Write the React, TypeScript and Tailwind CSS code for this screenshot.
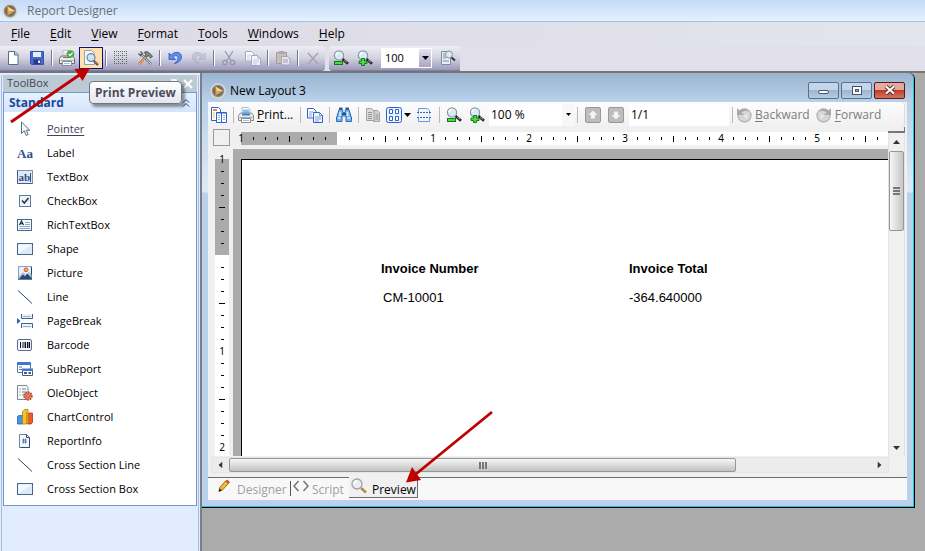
import React, { ReactNode } from "react";

const tahoma = "font-['Open_Sans','Noto_Sans',sans-serif]";

function Icon({ children, className = "" }: { children: ReactNode; className?: string }) {
  return (
    <svg viewBox="0 0 16 16" aria-hidden="true" className={`h-4 w-4 shrink-0 ${className}`}>
      {children}
    </svg>
  );
}

/* ---------- shared icons ---------- */

function AppLogo() {
  return (
    <Icon>
      <circle cx="8" cy="8" r="7" fill="#8f8a84" stroke="#dcd8d0" strokeWidth="1.6" />
      <circle cx="8" cy="8" r="5" fill="#6d6a70" />
      <path d="M5.500 3.500 13 8l-7.500 4.500z" fill="#e9a13a" />
      <path d="M5.500 3.500 13 8H7z" fill="#ffd27c" />
    </Icon>
  );
}

function Lens({ children }: { children?: ReactNode }) {
  return (
    <Icon>
      <path d="m9.500 9 5.500 4.800" stroke="#222" strokeWidth="2.6" />
      <path d="m11 9.800 3 2.600" stroke="#ddd" strokeWidth="0.8" />
      <circle cx="6" cy="5.400" r="4.600" fill="#d5ecfb" stroke="#8d969c" strokeWidth="1.2" />
      <path d="M3 5a3 3 0 0 1 3-2.600" stroke="#fff" strokeWidth="1.4" fill="none" />
      {children}
    </Icon>
  );
}

const ZoomOutIcon = () => (
  <Lens>
    <rect x="1.500" y="11.500" width="8" height="3" fill="#4fd84a" stroke="#127a12" />
  </Lens>
);

const ZoomInIcon = () => (
  <Lens>
    <path d="M4.500 8.500h3v2.500h2.500v2.500H7.500v2h-3v-2H2V11h2.500z" fill="#4fd84a" stroke="#127a12" />
  </Lens>
);

const CopyIcon = ({ stroke = "#2d62c8" }: { stroke?: string }) => (
  <Icon>
    <path d="M.500 1.500h6l2.500 2.500v7H.500z" fill="#fff" stroke={stroke} />
    <path d="M2 5h4M2 7h3M2 9h3" stroke={stroke} strokeWidth="0.6" />
    <path d="M6.500 5.500h6l3 3v7h-9z" fill="#f3f8ff" stroke={stroke} />
    <path d="M12.500 5.500v3h3M8 10h6M8 12h6M8 14h4" stroke={stroke} fill="none" strokeWidth="0.6" />
  </Icon>
);

const PrinterIcon = ({ check = false }: { check?: boolean }) => (
  <Icon>
    <path d="M4 7V.500h6.500L12 2v5z" fill="#fff" stroke="#b4bcc4" />
    <path d="M5 2.500h6V6H5z" fill={check ? "#dedede" : "#7cc4f4"} />
    <path d="M.500 8.500 2.500 6h11l2 2.500v5H.500z" fill="#e9e9e9" stroke={check ? "#6a6a6a" : "#8c8c8c"} />
    <path d="M4 7.500h8" stroke={check ? "#777" : "#2486e4"} strokeWidth={check ? 1 : 2} />
    <path d="M1.500 10.500h13" stroke="#a8a8a8" />
    <path d="M3.500 11.500h9v4h-9z" fill="#fff" stroke="#8a8a8a" />
    <path d="M5 13.500h6" stroke="#8cc8f0" />
    {check && (
      <>
        <circle cx="11.500" cy="4" r="3.800" fill="#4ba847" />
        <path d="m9.600 4 1.500 1.600 2.500-3" stroke="#fff" strokeWidth="1.300" fill="none" />
      </>
    )}
  </Icon>
);

/* ---------- main tool bar ---------- */

const NewIcon = () => (
  <Icon>
    <path d="M3.500 1.500h6.500l3 3v10H3.500z" fill="#fff" stroke="#53708a" />
    <path d="M9.500 1.500v3.500H13" fill="#bcd3ea" stroke="#53708a" />
  </Icon>
);

const SaveIcon = () => (
  <Icon>
    <path d="M1.500 1.500h13v13h-12l-1-1z" fill="#4668d0" stroke="#3450b0" />
    <path d="M4 2h8v5H4z" fill="#e8f0ff" />
    <path d="M4.500 9.500h7V14h-7z" fill="#253878" />
    <path d="M9 10.500h2V13H9z" fill="#e8f0ff" />
  </Icon>
);

const PreviewIcon = () => (
  <Icon>
    <path d="M1.500.500h7l3 3v11h-10z" fill="#f2f8ff" stroke="#8ea4bb" />
    <path d="m10.500 10.500 4.500 4.500" stroke="#3d4d60" strokeWidth="2.400" />
    <path d="m11 10.800 3.500 3.500" stroke="#d89a50" strokeWidth="1" />
    <circle cx="8" cy="7.500" r="3.900" fill="#cbe6f8" stroke="#77838e" strokeWidth="1.200" />
  </Icon>
);

const GridIcon = () => (
  <Icon>
    <path
      d="M1 1.500h13M1 5.500h13M1 9.500h13M1 13.500h13M1.500 1v13M5.500 1v13M9.500 1v13M13.500 1v13"
      stroke="#666"
      strokeDasharray="1 1"
      shapeRendering="crispEdges"
    />
  </Icon>
);

const HammerIcon = () => (
  <Icon>
    <path d="m4 4 10 10" stroke="#6a727a" strokeWidth="2.400" />
    <path d="m4 4 10 10" stroke="#cfd5da" strokeWidth="1" />
    <path d="M1.500 3.500 3.500 5.500 5.500 3.500 3.500 1.500" fill="none" stroke="#565e66" strokeWidth="1.400" />
    <path d="m9.500 6-7.500 8" stroke="#b8752c" strokeWidth="2.400" />
    <path d="m9.500 6-7.500 8" stroke="#f0bf80" strokeWidth="1" />
    <path d="M7 2.500 10 1.500l4 3 1.500 2-2 1.500-2-2.500L9.500 7 8 5.500l1-1.500z" fill="#7d8892" stroke="#3e474f" strokeWidth=".8" />
  </Icon>
);

const UndoIcon = ({ muted = false }: { muted?: boolean }) => (
  <Icon className={muted ? "-scale-x-100 opacity-60" : ""}>
    <path
      d="M2 3v6.500h6.500L6.200 7.300C7.500 5 10.500 4.800 11 7.500c.3 2.200-1 4.300-3.500 6 4-.7 6.800-3 7-6.500C14.600 2 8 .500 4.200 5.200z"
      fill={muted ? "#b4bbd4" : "#5a8ff0"}
      stroke={muted ? "#9aa3c2" : "#2857bd"}
      strokeWidth="0.800"
    />
  </Icon>
);

const CutIcon = () => (
  <Icon>
    <path d="m4 1 6 9.500M12 1 6 10.500" stroke="#9a98b0" strokeWidth="1.300" />
    <circle cx="4" cy="12.500" r="2.200" fill="none" stroke="#9a98b0" strokeWidth="1.300" />
    <circle cx="11.500" cy="12.500" r="2.200" fill="none" stroke="#9a98b0" strokeWidth="1.300" />
  </Icon>
);

const PasteIcon = () => (
  <Icon>
    <path d="M1.500 2.500h10v11h-10z" fill="#c8bfb4" stroke="#a49c9c" />
    <path d="M4 1h5v3H4z" fill="#aaa8b8" />
    <path d="M6.500 6.500h6l2.500 2.500v6H6.500z" fill="#e4e3ee" stroke="#a3a2b6" />
    <path d="M8 10h5M8 12h5" stroke="#a3a2b6" />
  </Icon>
);

const PageSearchIcon = () => (
  <Icon>
    <path d="M1.500 1.500h9v13h-9z" fill="#e9eef6" stroke="#7d8ba0" />
    <path d="M3 4h4M3 6h3M3 8h3M3 11h6" stroke="#7d8ba0" />
    <path d="m11 7 4 3.500" stroke="#333" strokeWidth="2" />
    <circle cx="9" cy="4.500" r="3.500" fill="#d8ebf7" stroke="#8a939b" />
  </Icon>
);

function ToolButton({ label, active, children }: { label: string; active?: boolean; children: ReactNode }) {
  return (
    <button
      type="button"
      aria-label={label}
      className={`flex h-[22px] w-6 items-center justify-center ${
        active ? "border border-[#10107a] bg-[#ffe0ae]" : ""
      }`}
    >
      {children}
    </button>
  );
}

const BarSeparator = () => (
  <span className="mx-[2px] h-4 w-[2px] shrink-0 border-r border-white bg-[#77759a]" />
);

const barStyle =
  "flex h-[25px] items-center border-b border-[#7e7ca3] bg-linear-to-b from-[#eeeef5] via-[#d3d2e0] to-[#9c9abb]";

function MainToolbar() {
  return (
    <div className="flex gap-1 bg-[#e1e0ea]" role="toolbar" aria-label="Standard">
      <div className={`${barStyle} rounded-r-sm pl-px`}>
        <ToolButton label="New"><NewIcon /></ToolButton>
        <ToolButton label="Save"><SaveIcon /></ToolButton>
        <BarSeparator />
        <ToolButton label="Print"><PrinterIcon check /></ToolButton>
        <ToolButton label="Print Preview" active><PreviewIcon /></ToolButton>
        <BarSeparator />
        <ToolButton label="Grid"><GridIcon /></ToolButton>
        <ToolButton label="Settings"><HammerIcon /></ToolButton>
        <BarSeparator />
        <ToolButton label="Undo"><UndoIcon /></ToolButton>
        <ToolButton label="Redo"><UndoIcon muted /></ToolButton>
        <BarSeparator />
        <ToolButton label="Cut"><CutIcon /></ToolButton>
        <ToolButton label="Copy"><CopyIcon stroke="#a3a6c0" /></ToolButton>
        <BarSeparator />
        <ToolButton label="Paste"><PasteIcon /></ToolButton>
        <BarSeparator />
        <ToolButton label="Delete">
          <Icon><path d="m3 3 10 11M13 3 3 14" stroke="#a5a3b5" strokeWidth="1.500" /></Icon>
        </ToolButton>
      </div>
      <div className={`${barStyle} rounded-l-sm`}>
        <ToolButton label="Zoom out"><ZoomOutIcon /></ToolButton>
        <ToolButton label="Zoom in"><ZoomInIcon /></ToolButton>
        <div className="relative mx-1 w-[51px]">
          <select
            aria-label="Zoom"
            className={`block h-5 w-full appearance-none bg-white pl-1 text-[11px] leading-5 text-black ${tahoma}`}
          >
            <option>100</option>
          </select>
          <span className="pointer-events-none absolute inset-y-px right-px flex w-3 items-center justify-center bg-linear-to-b from-[#e4e4ee] to-[#a7a5c4]">
            <DropArrow />
          </span>
        </div>
        <ToolButton label="Page preview"><PageSearchIcon /></ToolButton>
      </div>
    </div>
  );
}

function DropArrow() {
  return (
    <svg viewBox="0 0 7 4" aria-hidden="true" className="h-1 w-[7px]">
      <path d="M0 0h7L3.500 4z" fill="#000" />
    </svg>
  );
}

const menus = ["File", "Edit", "View", "Format", "Tools", "Windows", "Help"];

function MenuBar() {
  return (
    <nav className="flex h-6 items-center gap-5 bg-linear-to-r from-[#dbdae6] to-[#e4e4ec] px-[11px] font-['Open_Sans','Noto_Sans',sans-serif] text-[12px] text-black">
      {menus.map((m) => (
        <button key={m} type="button" className="leading-6">
          <span className="underline underline-offset-2">{m[0]}</span>
          {m.slice(1)}
        </button>
      ))}
    </nav>
  );
}

/* ---------- tool box ---------- */

const BoxIcon = () => (
  <Icon>
    <rect x=".500" y="2.500" width="15" height="11" fill="#dcebf8" stroke="#44698f" />
    <path d="M1.500 3.500h13l-13 9z" fill="#f3f9ff" />
  </Icon>
);

const LineIcon = () => (
  <Icon><path d="m1 1.500 14 13" stroke="#2b4468" /></Icon>
);

const tools: { label: string; icon: ReactNode }[] = [
  {
    label: "Pointer",
    icon: (
      <Icon>
        <path d="M4.500 1v11.500l2.700-2.600 2 4.600 2-.9-2-4.400h3.600z" fill="#f4f8fc" stroke="#4a6078" strokeWidth=".9" />
      </Icon>
    ),
  },
  {
    label: "Label",
    icon: (
      <Icon>
        <text x="0" y="13" fontFamily="Liberation Serif" fontWeight="bold" fontSize="13" fill="#2c4f8c">Aa</text>
      </Icon>
    ),
  },
  {
    label: "TextBox",
    icon: (
      <Icon>
        <rect x=".500" y="1.500" width="15" height="13" fill="#dfe9f5" stroke="#7d93b0" />
        <path d="M.500 1.500v13h15" fill="none" stroke="#3f5d86" />
        <text x="1.500" y="12" fontFamily="Liberation Serif" fontWeight="bold" fontSize="11" fill="#314f7e">ab</text>
        <path d="M13.500 4v9" stroke="#314f7e" />
      </Icon>
    ),
  },
  {
    label: "CheckBox",
    icon: (
      <Icon>
        <rect x="2.500" y="2.500" width="11" height="11" fill="#eef4fb" stroke="#5d7ba3" />
        <path d="m5 7.500 2.300 2.500L11.500 5" fill="none" stroke="#333" strokeWidth="1.600" />
      </Icon>
    ),
  },
  {
    label: "RichTextBox",
    icon: (
      <Icon>
        <rect x=".500" y="2.500" width="14" height="11" fill="#f6faff" stroke="#44698f" />
        <path d="M8 5.500h5M8 7.500h5M2.500 9.500H13M2.500 11.500H13" stroke="#8ba6c6" />
        <path d="m2.500 8 2-4 2 4M3.300 6.800h2.500" fill="none" stroke="#222" strokeWidth="1.100" />
      </Icon>
    ),
  },
  { label: "Shape", icon: <BoxIcon /> },
  {
    label: "Picture",
    icon: (
      <Icon>
        <rect x="1.500" y="1.500" width="13" height="13" fill="#e7f0fb" stroke="#8aa0bd" />
        <path d="M14.500 2v12.500H1.500" fill="none" stroke="#263f6c" />
        <path d="m2 11 4-3.500 3.500 2.500L12 7l2.500 2.500v5H2z" fill="#a9bfdc" />
        <path d="m2 14 4-4.500 2 2 2-3 4.500 4.500v1z" fill="#2b4674" />
        <circle cx="9" cy="4.800" r="1.900" fill="#f7a85c" stroke="#d05418" strokeWidth=".9" />
      </Icon>
    ),
  },
  { label: "Line", icon: <LineIcon /> },
  {
    label: "PageBreak",
    icon: (
      <Icon>
        <path d="M4.500 1v4.500h11V1M4.500 15v-4.500h11V15" fill="#eaf2fb" stroke="#44608a" />
        <path d="M6 3.500h8M6 13.500h8" stroke="#9ab0cc" />
        <path d="M0 5v6l3.500-3z" fill="#2f62a8" />
      </Icon>
    ),
  },
  {
    label: "Barcode",
    icon: (
      <Icon>
        <rect x=".500" y="2.500" width="14" height="11" rx="1.500" fill="#f5f8fc" stroke="#53709a" />
        <path d="M3.500 5v6M6 5v6M10.500 5v6" stroke="#111" />
        <path d="M8.300 5v6M12.300 5v6" stroke="#111" strokeWidth="1.500" />
      </Icon>
    ),
  },
  {
    label: "SubReport",
    icon: (
      <Icon>
        <path d="M.500 1.500h13v10H.500z" fill="#fff" stroke="#5d7ba3" />
        <path d="M.500 1h13v3H.500z" fill="#3f75d4" />
        <path d="M2 6h3M2 8.500h3" stroke="#5d7ba3" />
        <path d="M5.500 8.500h10v6h-10z" fill="#fff" stroke="#44608a" />
        <path d="M5 7.500h11v2.500H5z" fill="#3f75d4" />
        <path d="M7 12h3M11.500 12H14" stroke="#222" strokeWidth="1.500" />
      </Icon>
    ),
  },
  {
    label: "OleObject",
    icon: (
      <Icon>
        <path d="M.500.500h9l1.500 2v12H.500z" fill="#f7f9fb" stroke="#7b8794" />
        <path d="M2.500 4h1M5 4h4M2.500 7h1M5 7h4M2.500 10h1M5 10h2" stroke="#6d7f95" />
        <circle cx="11" cy="11" r="3.800" fill="#e08468" stroke="#b9442c" strokeWidth="1.800" strokeDasharray="1.500 1" />
        <circle cx="11" cy="11" r="1.300" fill="#fff" stroke="#b9442c" />
      </Icon>
    ),
  },
  {
    label: "ChartControl",
    icon: (
      <Icon>
        <path d="M.500 7.500 2 6.500h3.500v8.500h-5z" fill="#4c92e0" stroke="#2460ac" strokeWidth=".8" />
        <path d="M10.500 5.500 12 4h3.500v9.500L14 15h-3.500z" fill="#ee5a2c" stroke="#b43412" strokeWidth=".8" />
        <path d="M5.500 2.500 7.500.500H11v13L9.500 15h-4z" fill="#f5c432" stroke="#ad7d0c" strokeWidth=".8" />
        <path d="M9.500 3v12" stroke="#c7940f" />
      </Icon>
    ),
  },
  {
    label: "ReportInfo",
    icon: (
      <Icon>
        <path d="M2.500 1.500h7l3 3v10h-10z" fill="#f4f8fd" stroke="#6b84a3" />
        <path d="M12.500 5v9.500h-9M9.500 1.500v3h3" fill="none" stroke="#2f4c78" />
        <path d="M6.500 5.500v5M8.500 5.500v5M5 7h5M5 9h5" stroke="#4b6a9c" strokeWidth=".8" />
      </Icon>
    ),
  },
  { label: "Cross Section Line", icon: <LineIcon /> },
  { label: "Cross Section Box", icon: <BoxIcon /> },
];

function ToolBox() {
  return (
    <aside
      className={`flex w-[202px] shrink-0 flex-col border-r-2 border-[#7b7f88] bg-[#e1edff] pt-[2px] text-[11px] ${tahoma}`}
    >
      <div className="mx-px flex grow flex-col border-x border-[#a8bcdc] px-px">
        <header className="flex h-[17px] items-center gap-1 bg-[#bccad6] px-1 text-[#3f4650]">
          <h2 className="grow">ToolBox</h2>
          <button type="button" aria-label="Pin">
            <svg viewBox="0 0 10 10" className="h-[10px] w-[10px]" aria-hidden="true">
              <path d="M3 1h4v5H3zM1 6h8M5 6v4" stroke="#fff" strokeWidth="1.400" fill="none" />
            </svg>
          </button>
          <button type="button" aria-label="Close">
            <svg viewBox="0 0 10 10" className="h-[10px] w-[10px]" aria-hidden="true">
              <path d="m1 1 8 8M9 1 1 9" stroke="#fff" strokeWidth="2" />
            </svg>
          </button>
        </header>
        <section className="border border-[#6f98d0] bg-white">
          <button
            type="button"
            className="flex h-[19px] w-full items-center justify-between bg-linear-to-b from-[#e8f2ff] to-[#d3e5fc] pr-[6px] pl-[5px] text-[12px] font-bold text-[#1c4795]"
          >
            Standard
            <svg viewBox="0 0 8 8" className="h-2 w-2" aria-hidden="true">
              <path d="m1 3.500 3-3 3 3M1 7.500l3-3 3 3" stroke="#1c4795" strokeWidth="1" fill="none" />
            </svg>
          </button>
          <ul className="pt-[5px] pb-1">
            {tools.map((t, i) => (
              <li key={t.label}>
                <button type="button" className="flex h-6 w-full items-center gap-[14px] pl-[13px] text-left text-black">
                  {t.icon}
                  <span className={i === 0 ? "text-[#44405a] underline underline-offset-2" : ""}>{t.label}</span>
                </button>
              </li>
            ))}
          </ul>
        </section>
      </div>
    </aside>
  );
}

/* ---------- document window ---------- */

const DocIcon = () => (
  <Icon>
    <path d="M.500.500h7l2 2v11h-9z" fill="#fff" stroke="#2d62c8" />
    <path d="M2 3h4" stroke="#e8542c" strokeWidth="1.500" />
    <path d="M2 6h1.500M2 8h1.500M2 10h1.500" stroke="#f0a03c" />
    <path d="M5.500 5.500h10v10h-10z" fill="#fff" stroke="#2d62c8" />
    <path d="M5.500 6h10" stroke="#2d62c8" />
    <path d="M10.500 5.500v10" stroke="#2d62c8" />
    <path d="M7 8.500h2M7 10.500h2M7 12.500h2M12 8.500h2M12 10.500h2M12 12.500h2" stroke="#8cb0ea" />
  </Icon>
);

const BinocularsIcon = () => (
  <Icon>
    <path d="M3 2.500h3.500l.5 3h2l.5-3H13l2.500 8.500v3.500H10V9H6v5.500H.500V11z" fill="#79b4ea" stroke="#2d6bb4" />
    <path d="M3 1.500h3.500M9.500 1.500H13" stroke="#2f5a93" strokeWidth="2" />
    <path d="M2 11h2.500M11.500 11H14M4 5v4M11.500 5v4" stroke="#e4f3ff" strokeWidth="1.400" />
    <path d="M6 7h4" stroke="#24528c" strokeWidth="2" />
  </Icon>
);

const ContentsIcon = () => (
  <Icon>
    <path d="M8.500 3.500h4l2 2v9h-6z" fill="#d0d0d0" stroke="#a4a4a4" />
    <path d="M1.500 1.500h5l2.500 2.500v9.500H1.500z" fill="#dcdcdc" stroke="#a0a0a0" />
    <path d="M3 5.500h4M3 7.500h4M3 9.500h4M3 11.500h4M10.500 8h3M10.500 10h3M10.500 12h3" stroke="#959595" />
  </Icon>
);

const PagesIcon = () => (
  <Icon>
    <rect x=".500" y=".500" width="15" height="15" rx="2" fill="#e7f1ff" stroke="#2d62c8" />
    <path d="M3.500 2.500h3v4h-3zM9.500 2.500h3v4h-3zM3.500 9.500h3v4h-3zM9.500 9.500h3v4h-3z" fill="#fff" stroke="#2d62c8" />
  </Icon>
);

const HeaderFooterIcon = () => (
  <Icon>
    <path d="M2.500 5V1.500h9l2 2V5M2.500 11v3.500h11V11" fill="#eef5ff" stroke="#6a9ae0" />
    <path d="M1 5.500h14M1 10.500h14" stroke="#2d62c8" strokeDasharray="2 1" />
    <path d="M2.500 6v4M13.500 6v4" stroke="#a0c0ee" strokeDasharray="1 1" />
  </Icon>
);

const PageArrow = ({ down = false }: { down?: boolean }) => (
  <Icon className={down ? "rotate-180" : ""}>
    <rect x=".500" y=".500" width="15" height="15" rx="1.500" fill="#bdbdbd" stroke="#989898" />
    <path d="m8 3.500 4.500 4.500H10v3.500H6V8H3.500z" fill="#f4f4f4" />
  </Icon>
);

const HistoryIcon = ({ forward = false }: { forward?: boolean }) => (
  <Icon className={forward ? "-scale-x-100" : ""}>
    <circle cx="8.500" cy="8.500" r="6.500" fill="#d6d6d6" stroke="#b5b5b5" strokeWidth="1.400" />
    <path d="m8.500 8.500 3 3M8.500 8.500h3M5 12h1M12 6h1" stroke="#f2f2f2" strokeWidth="1.200" />
    <path d="M1 1v7h7L5.500 5.500C7 4 9.500 3.600 12 4.500 9.500 1.500 6 1.500 3.500 3.500z" fill="#a9a9a9" />
  </Icon>
);

function PreviewButton({ label, width, children }: { label: string; width: string; children: ReactNode }) {
  return (
    <button type="button" aria-label={label} className={`flex h-6 items-center justify-center ${width}`}>
      {children}
    </button>
  );
}

const Divider = () => <span className="mx-[3px] h-4 w-px shrink-0 bg-[#b9b9b9]" />;

function PreviewToolbar() {
  return (
    <div
      role="toolbar"
      aria-label="Preview"
      className="mr-[2px] flex h-[25px] items-center rounded-r-sm border-r border-[#dcdcdc] bg-linear-to-b from-[#fdfdfd] to-[#f0f0f0] font-['Open_Sans','Noto_Sans',sans-serif] text-[12px] text-black"
    >
      <PreviewButton label="Document map" width="w-[22px]"><DocIcon /></PreviewButton>
      <Divider />
      <button type="button" className="flex w-[60px] items-center gap-[3px] pl-px">
        <PrinterIcon />
        <span><span className="underline underline-offset-2">P</span>rint...</span>
      </button>
      <Divider />
      <PreviewButton label="Copy" width="w-[22px]"><CopyIcon /></PreviewButton>
      <Divider />
      <PreviewButton label="Find" width="w-[22px]"><BinocularsIcon /></PreviewButton>
      <Divider />
      <PreviewButton label="Single page" width="w-[22px]"><ContentsIcon /></PreviewButton>
      <button type="button" aria-label="Multiple pages" className="flex w-7 items-center gap-[2px] pl-[2px]">
        <PagesIcon />
        <DropArrow />
      </button>
      <PreviewButton label="Continuous" width="w-6"><HeaderFooterIcon /></PreviewButton>
      <Divider />
      <PreviewButton label="Zoom out" width="w-[22px]"><ZoomOutIcon /></PreviewButton>
      <PreviewButton label="Zoom in" width="w-6"><ZoomInIcon /></PreviewButton>
      <div className="relative w-[85px]">
        <select aria-label="Preview zoom" className="block h-[22px] w-full appearance-none bg-white pl-[2px] leading-[22px]">
          <option>100 %</option>
        </select>
        <span className="pointer-events-none absolute inset-y-0 right-0 flex w-3 items-center justify-center bg-[#f7f7f7]">
          <svg viewBox="0 0 5 3" aria-hidden="true" className="h-[3px] w-[5px]">
            <path d="M0 0h5L2.500 3z" />
          </svg>
        </span>
      </div>
      <Divider />
      <PreviewButton label="Previous page" width="w-6"><PageArrow /></PreviewButton>
      <PreviewButton label="Next page" width="w-[22px]"><PageArrow down /></PreviewButton>
      <input aria-label="Page" defaultValue="1/1" className="ml-[2px] h-[22px] w-[100px] bg-white pl-[2px]" />
      <Divider />
      <button type="button" className="flex items-center gap-[3px] text-[#7c7c7c]">
        <HistoryIcon />
        <span><span className="underline underline-offset-2">B</span>ackward</span>
      </button>
      <button type="button" className="ml-[6px] flex items-center gap-[3px] text-[#7c7c7c]">
        <HistoryIcon forward />
        <span><span className="underline underline-offset-2">F</span>orward</span>
      </button>
    </div>
  );
}

const rulerLabel = (inch: number) => (inch === 0 ? "1" : inch === 1 ? "" : String(inch - 1));

function HorizontalRuler() {
  return (
    <div className="flex h-[13px] w-0 grow overflow-hidden pl-1 text-[10px]">
      {Array.from({ length: 7 }, (_, inch) => (
        <div key={inch} className={`flex w-24 shrink-0 ${inch === 0 ? "bg-[#ababab]" : "bg-white"}`}>
          {Array.from({ length: 8 }, (_, n) => (
            <span key={n} className="flex w-3 shrink-0 items-center">
              {n === 0 ? (
                <span className="-ml-1 w-2 text-center leading-[13px]">{rulerLabel(inch)}</span>
              ) : (
                <span className={`w-px bg-black ${n === 4 ? "h-[6px]" : "h-[3px]"}`} />
              )}
            </span>
          ))}
        </div>
      ))}
      <span className="grow bg-white" />
    </div>
  );
}

function VerticalRuler() {
  return (
    <div className="mr-1 ml-[7px] flex w-[14px] shrink-0 flex-col overflow-hidden pt-[10px] text-[10px]">
      {Array.from({ length: 4 }, (_, inch) => (
        <div key={inch} className={`h-24 shrink-0 ${inch === 0 ? "bg-[#ababab]" : "bg-white"}`}>
          {Array.from({ length: 8 }, (_, n) => (
            <div key={n} className="flex h-3 flex-col items-center">
              {n === 0 ? (
                <span className="-mt-[6px] leading-3">{rulerLabel(inch)}</span>
              ) : (
                <span className={`h-px bg-black ${n === 4 ? "w-[6px]" : "w-[3px]"}`} />
              )}
            </div>
          ))}
        </div>
      ))}
      <span className="grow bg-white" />
    </div>
  );
}

function ScrollArrow({ turn }: { turn: string }) {
  return (
    <svg viewBox="0 0 7 4" aria-hidden="true" className={`h-1 w-[7px] ${turn}`}>
      <path d="M0 4h7L3.500 0z" fill="#333" />
    </svg>
  );
}

function VerticalScrollbar() {
  return (
    <div className="mr-[2px] flex w-[17px] shrink-0 flex-col">
      <div className="h-[6px] shrink-0 border-r border-b-2 border-[#777] bg-[#f0f0f0]" />
      <div className="flex grow flex-col items-center border-x border-[#e3e3e3] bg-[#f0f0f0]">
        <button type="button" aria-label="Scroll up" className="flex h-[18px] w-full items-center justify-center">
          <ScrollArrow turn="" />
        </button>
        <div className="flex h-20 w-full flex-col items-center justify-center gap-px rounded-xs border border-[#979797] bg-linear-to-r from-[#f6f6f6] via-[#dedede] to-[#c6c6c6]">
          <span className="h-[2px] w-[7px] bg-[#777]" />
          <span className="h-[2px] w-[7px] bg-[#777]" />
          <span className="h-[2px] w-[7px] bg-[#777]" />
        </div>
        <button type="button" aria-label="Scroll down" className="mt-auto flex h-4 w-full items-center justify-center">
          <ScrollArrow turn="rotate-180" />
        </button>
      </div>
    </div>
  );
}

function HorizontalScrollbar() {
  return (
    <div className="mr-[18px] ml-[3px] flex h-4 shrink-0 items-center border border-[#e6e6e6] bg-[#ececec]">
      <button type="button" aria-label="Scroll left" className="flex h-full w-[17px] items-center justify-center">
        <ScrollArrow turn="-rotate-90" />
      </button>
      <div className="flex h-full w-3/4 items-center justify-center gap-px rounded-xs border border-[#979797] bg-linear-to-b from-[#f6f6f6] via-[#dcdcdc] to-[#c2c2c2]">
        <span className="h-[7px] w-[2px] bg-[#777]" />
        <span className="h-[7px] w-[2px] bg-[#777]" />
        <span className="h-[7px] w-[2px] bg-[#777]" />
      </div>
      <button type="button" aria-label="Scroll right" className="ml-auto flex h-full w-[17px] items-center justify-center">
        <ScrollArrow turn="rotate-90" />
      </button>
    </div>
  );
}

function ReportPage() {
  return (
    <div className="flex min-w-0 grow flex-col overflow-hidden bg-[#ababab] pt-[10px] pl-2">
      <div className="grow border-t border-l border-black bg-white pt-[99px] pl-[139px]">
        <table className="table-fixed text-left font-['Liberation_Sans',Arial,sans-serif] text-[13px] text-black">
          <thead>
            <tr>
              <th className="h-5 w-[248px] p-0">Invoice Number</th>
              <th className="w-[120px] p-0">Invoice Total</th>
            </tr>
          </thead>
          <tbody>
            <tr>
              <td className="h-[38px] p-0 pl-[2px]">CM-10001</td>
              <td className="p-0">-364.640000</td>
            </tr>
          </tbody>
        </table>
      </div>
    </div>
  );
}

function Tabs() {
  return (
    <div
      role="tablist"
      className="flex h-[23px] shrink-0 bg-[#f8f8f8] font-['Open_Sans','Noto_Sans',sans-serif] text-[12px] text-[#a0a0a0]"
    >
      <button role="tab" type="button" className="flex w-[82px] items-center gap-[5px] border-t border-[#6c6c6c] pt-[2px] pl-2">
        <Icon className="-mt-2">
          <path d="m3 13 1-4 5.500-6 3 2.500-6 6.500z" fill="#f5b82e" stroke="#7a5a18" strokeWidth=".8" />
          <path d="m9.500 3 1.500-1.500 3 2.500-1.500 1.500z" fill="#c8503c" />
          <path d="M2.500 14 3.500 10.500l2.500 2z" fill="#222" />
        </Icon>
        Designer
      </button>
      <button role="tab" type="button" className="flex w-[59px] items-center gap-[2px] border-t border-[#6c6c6c] pt-[2px]">
        <span className="-mt-1 h-[15px] w-px bg-[#555]" />
        <Icon className="-mt-2">
          <path d="M5.500 3 1 8l4.500 5M10.500 3 15 8l-4.500 5" fill="none" stroke="#777" strokeWidth="1.600" />
        </Icon>
        <span className="pl-px">Script</span>
      </button>
      <button
        role="tab"
        type="button"
        aria-selected="true"
        className="mb-[2px] flex w-[69px] items-center gap-[5px] border-r border-b border-[#6c6c6c] bg-[#f0f0f0] pt-[5px] pl-[2px] text-black"
      >
        <Icon className="-mt-2">
          <path d="m10 10 5 4.500" stroke="#b98a50" strokeWidth="2.600" />
          <circle cx="6" cy="6" r="5" fill="#e9eef2" stroke="#a0a4a8" strokeWidth="1.300" />
          <path d="M3 6a3 3 0 0 1 3-3" stroke="#fff" strokeWidth="1.500" fill="none" />
        </Icon>
        Preview
      </button>
      <span className="grow border-t border-[#6c6c6c]" />
    </div>
  );
}

function WindowButton({ label, danger, children }: { label: string; danger?: boolean; children: ReactNode }) {
  return (
    <button
      type="button"
      aria-label={label}
      className={`flex h-[17px] w-[31px] items-center justify-center rounded-xs border ${
        danger
          ? "border-[#5a1c18] bg-linear-to-b from-[#e5a99e] from-45% via-[#bf3b28] via-50% to-[#d4735f]"
          : "border-[#56708f] bg-linear-to-b from-[#c4d6e9] from-45% via-[#9db5d0] via-50% to-[#b6cce3]"
      }`}
    >
      {children}
    </button>
  );
}

function DocumentWindow() {
  return (
    <section className="mr-[10px] mb-[43px] flex min-w-0 grow flex-col rounded-tr-md border-r border-b border-black">
      <div className="flex grow flex-col rounded-tr-md border-r border-b border-[#20c0e0] bg-[linear-gradient(#9ab3cf_0px,#b9d1ea_29px,#dfeaf6_119px,#b9d1ea_120px)] pr-[6px] pb-[6px] pl-[6px]">
        <header className="flex h-[29px] shrink-0 items-center gap-1 pt-[6px] pr-[2px] pl-[2px]">
          <AppLogo />
          <h1 className="grow font-['Open_Sans','Noto_Sans',sans-serif] text-[12px] text-black">New Layout 3</h1>
          <div className="flex gap-[2px] pb-px">
            <WindowButton label="Minimize">
              <span className="mt-1 h-1 w-[11px] rounded-xs border border-[#44536b] bg-white" />
            </WindowButton>
            <WindowButton label="Restore">
              <svg viewBox="0 0 10 9" className="h-[9px] w-[10px]" aria-hidden="true">
                <rect x=".500" y=".500" width="9" height="8" fill="#fff" stroke="#44536b" />
                <rect x="3.500" y="3.500" width="3" height="2" fill="#9db5d0" stroke="#44536b" />
              </svg>
            </WindowButton>
            <WindowButton label="Close" danger>
              <svg viewBox="0 0 12 10" className="h-[10px] w-3" aria-hidden="true">
                <path d="m2 1.500 8 7M10 1.500l-8 7" stroke="#5a2a28" strokeWidth="4" />
                <path d="m2 1.500 8 7M10 1.500l-8 7" stroke="#fff" strokeWidth="2.200" />
              </svg>
            </WindowButton>
          </div>
        </header>
        <div className="flex grow flex-col bg-[#f0f0f0]">
          <PreviewToolbar />
          <div className="flex grow">
            <div className="flex min-w-0 grow flex-col">
              <div className="flex h-[22px] shrink-0 items-end pb-1 pl-[5px]">
                <span className="mr-[7px] -mb-px h-[17px] w-[17px] shrink-0 border border-[#9a9a9a] bg-[#f0f0f0]" />
                <HorizontalRuler />
              </div>
              <div className="flex h-0 grow overflow-hidden">
                <VerticalRuler />
                <ReportPage />
              </div>
            </div>
            <VerticalScrollbar />
          </div>
          <div className="flex h-[21px] shrink-0 flex-col pt-px">
            <HorizontalScrollbar />
          </div>
          <Tabs />
        </div>
      </div>
    </section>
  );
}

/* ---------- callouts ---------- */

function Callouts() {
  return (
    <>
      <div
        role="tooltip"
        className={`absolute top-[81px] left-[89px] rounded border border-[#767676] bg-linear-to-b from-white to-[#e4e5f0] px-[5px] text-[12px] leading-[21px] font-bold text-[#4c4c58] shadow-[3px_3px_3px_rgba(0,0,0,0.4)] ${tahoma}`}
      >
        Print Preview
      </div>
      <svg className="pointer-events-none absolute top-0 left-0 h-[551px] w-[500px]" aria-hidden="true">
        <g stroke="#c00000" strokeWidth="2.800" fill="#c00000">
          <path d="M11 122 80 74.500" />
          <path d="M90 68 82.500 81 74.500 69z" stroke="none" />
          <path d="M492 412 416 474" />
          <path d="M406 482.500 421 480 412 467z" stroke="none" />
        </g>
      </svg>
    </>
  );
}

export default function App() {
  return (
    <div className="relative flex min-h-screen flex-col bg-[#ababab]">
      <header className="flex h-[22px] items-center gap-[9px] border-b border-[#9cc4e8] bg-linear-to-b from-[#c3daf6] to-[#e6f1fd] pl-[2px] font-['Open_Sans','Noto_Sans',sans-serif] text-[12px] text-[#66707c]">
        <AppLogo />
        Report Designer
      </header>
      <MenuBar />
      <MainToolbar />
      <main className="flex grow border-t-2 border-[#757575]">
        <ToolBox />
        <DocumentWindow />
      </main>
      <Callouts />
    </div>
  );
}
